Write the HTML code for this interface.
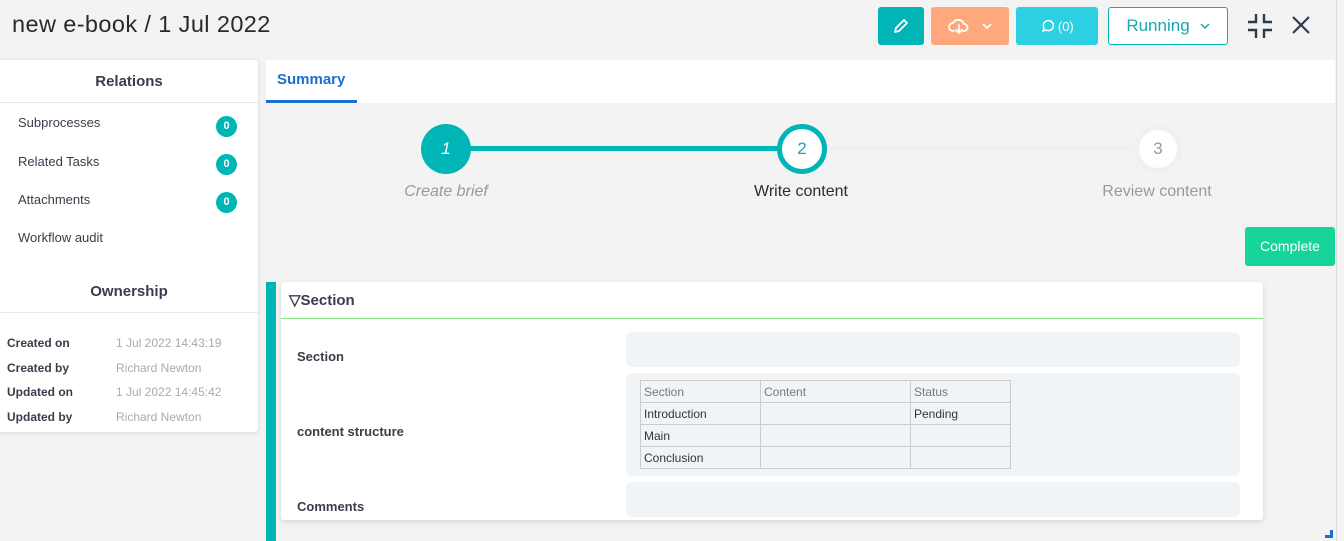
<!DOCTYPE html>
<html><head><style>
*{box-sizing:border-box;margin:0;padding:0}
body{width:1344px;height:541px;background:#f3f3f3;font-family:"Liberation Sans",sans-serif;color:#333;position:relative;overflow:hidden}
.a{position:absolute}
.btn{position:absolute;top:7px;height:38px;border-radius:3px;display:flex;align-items:center;justify-content:center;color:#fff}
.lp{left:0;top:60px;width:258px;height:372px;background:#fff;border-radius:0 4px 4px 0;box-shadow:0 1px 4px rgba(0,0,0,.12)}
.h{font-weight:bold;font-size:15px;color:#3a3d4a;text-align:center}
.rel{font-size:13px;color:#3a3d4a;left:18px}
.badge{left:216px;width:21px;height:21px;border-radius:50%;background:#00b5b5;color:#fff;font-size:11px;font-weight:bold;text-align:center;line-height:21px}
.ol{left:7px;font-size:12px;font-weight:bold;color:#3a3d4a}
.ov{left:116px;font-size:12px;color:#aaa}
.inp{left:626px;width:614px;background:#f1f4f7;border-radius:6px}
table{border-collapse:collapse;font-size:12px;color:#333}
td{border:1px solid #ccc;height:22px;padding:0 3px;vertical-align:middle}
.fl{left:297px;font-size:13px;font-weight:bold;color:#3a3d4a}
</style></head><body>
<div class="a" style="left:12px;top:11px;font-size:23.5px;color:#2a2a2a;letter-spacing:0.4px">new e-book / 1 Jul 2022</div>
<div class="btn" style="left:878px;width:46px;background:#00b5b5"><svg width="18" height="18" viewBox="0 0 18 18" fill="none" stroke="#fff" stroke-width="1.8" stroke-linejoin="round"><path d="M3 15l1-4 8-8 3 3-8 8z"/></svg></div>
<div class="btn" style="left:931px;width:78px;background:#ffa87d"><svg width="22" height="18" viewBox="0 0 22 18" fill="none" stroke="#fff" stroke-width="1.8" stroke-linecap="round"><path d="M6 14H5a4 4 0 0 1 0-8 6 6 0 0 1 11 1 3.5 3.5 0 0 1 0 7h-1"/><path d="M11 8v8M8 13l3 3 3-3"/></svg><svg style="margin-left:12px" width="10" height="6" viewBox="0 0 10 6" fill="none" stroke="#fff" stroke-width="1.6"><path d="M1 1l4 4 4-4"/></svg></div>
<div class="btn" style="left:1016px;width:82px;background:#2dcfe3;font-size:13px"><svg width="14" height="14" viewBox="0 0 14 14" fill="none" stroke="#fff" stroke-width="1.5"><path d="M3 12l1-3a5 5 0 1 1 2 2z"/></svg>&nbsp;(0)</div>
<div class="btn" style="left:1108px;width:120px;background:#fff;border:1px solid #00b5b5;color:#1aa8b0;font-size:17px">Running<svg style="margin-left:10px" width="10" height="6" viewBox="0 0 10 6" fill="none" stroke="#1aa8b0" stroke-width="1.5"><path d="M1 1l4 4 4-4"/></svg></div>
<svg class="a" style="left:1247px;top:13px" width="26" height="26" viewBox="0 0 26 26" fill="none" stroke="#2e3a4e" stroke-width="2.4"><path d="M9 1v8H1M17 1v8h8M9 25v-8H1M17 25v-8h8"/></svg>
<svg class="a" style="left:1291px;top:15px" width="20" height="20" viewBox="0 0 20 20" fill="none" stroke="#2e3a4e" stroke-width="2.2"><path d="M2 2l16 16M18 2L2 18"/></svg>

<div class="a lp">
<div class="a h" style="top:13px;width:258px">Relations</div>
<div class="a" style="top:42px;width:258px;border-top:1px solid #e8e8e8"></div>
<div class="a rel" style="top:55px">Subprocesses</div><div class="a badge" style="top:56px">0</div>
<div class="a rel" style="top:94px">Related Tasks</div><div class="a badge" style="top:94px">0</div>
<div class="a rel" style="top:132px">Attachments</div><div class="a badge" style="top:132px">0</div>
<div class="a rel" style="top:170px">Workflow audit</div>
<div class="a h" style="top:223px;width:258px">Ownership</div>
<div class="a" style="top:252px;width:258px;border-top:1px solid #e8e8e8"></div>
<div class="a ol" style="top:276px">Created on</div><div class="a ov" style="top:276px">1 Jul 2022 14:43:19</div>
<div class="a ol" style="top:301px">Created by</div><div class="a ov" style="top:301px">Richard Newton</div>
<div class="a ol" style="top:325px">Updated on</div><div class="a ov" style="top:325px">1 Jul 2022 14:45:42</div>
<div class="a ol" style="top:350px">Updated by</div><div class="a ov" style="top:350px">Richard Newton</div>
</div>

<div class="a" style="left:266px;top:60px;width:1069px;height:43px;background:#fff"></div>
<div class="a" style="left:277px;top:71px;font-size:15px;font-weight:bold;color:#1a6fd0">Summary</div>
<div class="a" style="left:266px;top:100px;width:91px;height:3px;background:#1a6fd0"></div>
<div class="a" style="left:1336px;top:0;width:1px;height:541px;background:#ddd"></div>

<div class="a" style="left:446px;top:146px;width:356px;height:5px;background:#00b5b5"></div>
<div class="a" style="left:802px;top:147px;width:356px;height:4px;background:#eef0f4"></div>
<div class="a" style="left:421px;top:124px;width:50px;height:50px;border-radius:50%;background:#00b5b5;color:#fff;font-style:italic;font-size:17px;text-align:center;line-height:50px">1</div>
<div class="a" style="left:777px;top:124px;width:50px;height:50px;border-radius:50%;background:#fff;border:5px solid #00b5b5;color:#1aa8b0;font-size:17px;text-align:center;line-height:40px">2</div>
<div class="a" style="left:1134px;top:125px;width:48px;height:48px;border-radius:50%;background:#fff;border:5px solid #eef0f4;color:#999;font-size:17px;text-align:center;line-height:38px">3</div>
<div class="a" style="left:346px;top:183px;width:200px;text-align:center;font-size:16px;font-style:italic;color:#999">Create brief</div>
<div class="a" style="left:701px;top:183px;width:200px;text-align:center;font-size:16px;color:#2a2a3a">Write content</div>
<div class="a" style="left:1057px;top:183px;width:200px;text-align:center;font-size:16px;color:#999">Review content</div>
<div class="a" style="left:1245px;top:227px;width:90px;height:39px;border-radius:3px;background:#17d49a;color:#fff;font-size:14px;text-align:center;line-height:39px">Complete</div>

<div class="a" style="left:266px;top:282px;width:10px;height:259px;background:#00b5b5"></div>
<div class="a" style="left:281px;top:282px;width:982px;height:238px;background:#fff;border-radius:3px;box-shadow:0 2px 6px rgba(0,0,0,.12)"></div>
<div class="a" style="left:289px;top:291px;font-size:15px;font-weight:bold;color:#3a3d4a">▽Section</div>
<div class="a" style="left:281px;top:318px;width:982px;height:1px;background:#86e886"></div>
<div class="a fl" style="top:349px">Section</div>
<div class="a fl" style="top:424px">content structure</div>
<div class="a fl" style="top:499px">Comments</div>
<div class="a inp" style="top:332px;height:35px"></div>
<div class="a inp" style="top:373px;height:103px"></div>
<div class="a inp" style="top:482px;height:35px"></div>
<table class="a" style="left:640px;top:380px;width:371px">
<tr><td style="width:120px;color:#777">Section</td><td style="width:150px;color:#777">Content</td><td style="color:#777">Status</td></tr>
<tr><td>Introduction</td><td></td><td>Pending</td></tr>
<tr><td>Main</td><td></td><td></td></tr>
<tr><td>Conclusion</td><td></td><td></td></tr>
</table>
<div class="a" style="left:1325px;top:530px;width:8px;height:8px;border-right:3px solid #1a6fd0;border-bottom:3px solid #1a6fd0"></div>
</body></html>
